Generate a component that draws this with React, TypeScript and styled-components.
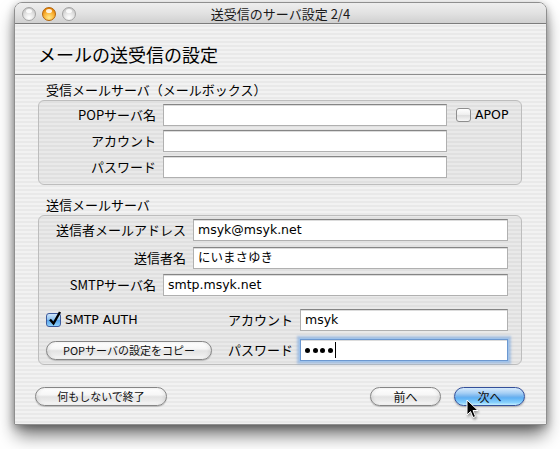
import React from "react";
import styled, { createGlobalStyle, css } from "styled-components";

const JP = `"Noto Sans CJK JP", "Noto Sans", sans-serif`;
const LATIN = `"DejaVu Sans", "Noto Sans CJK JP", sans-serif`;

const GlobalStyle = createGlobalStyle`
  html, body { margin: 0; padding: 0; background: #ffffff; }
  body { font-family: ${JP}; color: #000; }
  * { box-sizing: border-box; }
`;

const Page = styled.div`
  position: relative;
  width: 560px;
  height: 449px;
  padding: 2px 14px 0 14px;
  overflow: hidden;
`;

const Window = styled.div`
  width: 533px;
  height: 423px;
  display: flex;
  flex-direction: column;
  border: 1px solid #8f8f8f;
  border-radius: 8px 8px 0 0;
  overflow: hidden;
  box-shadow: 0 12px 18px -2px rgba(0, 0, 0, 0.55), 0 2px 8px rgba(0, 0, 0, 0.3);
  background: repeating-linear-gradient(
    to bottom,
    #f2f2f2 0px,
    #f2f2f2 2px,
    #e9e9e9 2px,
    #e9e9e9 4px
  );
`;

const TitleBar = styled.div`
  height: 21px;
  flex: none;
  display: grid;
  grid-template-columns: 70px 1fr 70px;
  align-items: center;
  background: linear-gradient(to bottom, #eeeeee 0%, #e2e2e2 50%, #d0d0d0 100%);
  border-bottom: 1px solid #7c7c7c;
  padding-top: 1px;
`;

const Lights = styled.div`
  display: flex;
  gap: 6px;
  padding-left: 7px;
`;

const Light = styled.div<{ $active?: boolean }>`
  position: relative;
  width: 14px;
  height: 14px;
  border-radius: 50%;
  ${(p) =>
    p.$active
      ? css`
          border: 1px solid #b3650a;
          background: radial-gradient(circle at 50% 80%, #ffe98c 0%, #fbb63a 45%, #e07c00 85%, #c26100 100%);
        `
      : css`
          border: 1px solid #a3a3a3;
          background: radial-gradient(circle at 50% 80%, #ffffff 0%, #e3e3e3 45%, #c6c6c6 85%, #b5b5b5 100%);
        `}
  &::after {
    content: "";
    position: absolute;
    left: 3px;
    top: 1px;
    width: 6px;
    height: 4px;
    border-radius: 50%;
    background: rgba(255, 255, 255, 0.85);
  }
`;

const Title = styled.div`
  text-align: center;
  font-family: ${JP};
  font-size: 13px;
  line-height: 16px;
  color: #1a1a1a;
`;

const Content = styled.div`
  flex: 1;
  display: flex;
  flex-direction: column;
`;

const Header = styled.div`
  padding: 19px 23px 9px;
  font-size: 18px;
  line-height: 22px;
  border-bottom: 1px solid #8d8d8d;
`;

const Body = styled.div`
  padding: 0 24px 0 23px;
  display: flex;
  flex-direction: column;
`;

const GroupLabel = styled.div<{ $top: number }>`
  margin-top: ${(p) => p.$top}px;
  height: 16px;
  line-height: 16px;
  font-size: 13px;
  padding-left: 8px;
`;

const GroupBox = styled.div<{ $pb: number }>`
  margin-top: 2px;
  border: 1px solid #bdbdbd;
  border-radius: 6px;
  background: rgba(0, 0, 0, 0.035);
  padding: 3px 12px ${(p) => p.$pb}px 0;
  display: flex;
  flex-direction: column;
`;

const Row = styled.div<{ $mt?: number }>`
  display: flex;
  align-items: center;
  height: 22px;
  margin-top: ${(p) => p.$mt ?? 0}px;
`;

const Label = styled.span<{ $w: number }>`
  width: ${(p) => p.$w}px;
  flex: none;
  text-align: right;
  font-size: 13px;
  line-height: 16px;
  margin-right: 7px;
  white-space: nowrap;
`;

const Field = styled.div<{ $w: number; $focus?: boolean }>`
  width: ${(p) => p.$w}px;
  height: 22px;
  flex: none;
  background: #ffffff;
  border: 1px solid #b0b0b0;
  border-top-color: #858585;
  box-shadow: inset 0 1px 0 #dcdcdc;
  font-family: ${LATIN};
  font-size: 12.5px;
  line-height: 20px;
  padding: 0 4px;
  display: flex;
  align-items: center;
  white-space: nowrap;
  ${(p) =>
    p.$focus &&
    css`
      border-color: #6c98d0;
      box-shadow: 0 0 0 1px #9fc2ea, 0 0 2px 3px rgba(120, 165, 222, 0.55), inset 0 1px 0 #dcdcdc;
    `}
`;

const Dot = styled.span`
  width: 5px;
  height: 5px;
  border-radius: 50%;
  background: #000;
  margin-right: 2.5px;
  flex: none;
`;

const Caret = styled.span`
  display: inline-block;
  width: 1px;
  height: 16px;
  background: #000;
  margin-left: 0px;
`;

const CheckWrap = styled.label`
  display: flex;
  align-items: center;
  gap: 4px;
  font-family: ${LATIN};
  font-size: 12.5px;
  line-height: 16px;
  white-space: nowrap;
`;

const Box = styled.span<{ $checked?: boolean }>`
  position: relative;
  width: 15px;
  height: 14px;
  flex: none;
  border-radius: 3px;
  ${(p) =>
    p.$checked
      ? css`
          border: 1px solid #3e5b9d;
          background: linear-gradient(to bottom, #cfe5fa 0%, #8fc3f0 45%, #5aa4ea 55%, #8ed2fd 100%);
        `
      : css`
          border: 1px solid #8e8e8e;
          background: linear-gradient(to bottom, #ffffff 0%, #f0f0f0 45%, #dedede 55%, #f7f7f7 100%);
        `}
  svg {
    position: absolute;
    left: 1px;
    top: -3px;
  }
`;

const LeftCell = styled.div`
  width: 181px;
  flex: none;
  padding-left: 7px;
  display: flex;
  align-items: center;
`;

const AquaButton = styled.button<{ $w: number; $default?: boolean; $size?: number }>`
  width: ${(p) => p.$w}px;
  height: 19px;
  flex: none;
  border-radius: 10px;
  font-family: ${JP};
  font-size: ${(p) => p.$size ?? 11}px;
  line-height: 17px;
  padding: 0;
  color: #111;
  cursor: default;
  ${(p) =>
    p.$default
      ? css`
          border: 1px solid #34509a;
          background: linear-gradient(
            to bottom,
            #d6eafc 0%,
            #a6cff5 30%,
            #74b4ee 50%,
            #5fb0f3 58%,
            #86d0fd 85%,
            #c5efff 100%
          );
          box-shadow: 0 1px 2px rgba(0, 0, 0, 0.3);
        `
      : css`
          border: 1px solid #858585;
          background: linear-gradient(
            to bottom,
            #ffffff 0%,
            #f6f6f6 40%,
            #e3e3e3 52%,
            #ececec 78%,
            #fbfbfb 100%
          );
          box-shadow: 0 1px 1px rgba(0, 0, 0, 0.2), inset 2px 0 3px rgba(0, 0, 0, 0.06),
            inset -2px 0 3px rgba(0, 0, 0, 0.06);
        `}
`;

const Footer = styled.div`
  margin-top: 22px;
  padding: 0 21px 0 20px;
  display: flex;
  align-items: center;
  gap: 13px;
`;

const Spacer = styled.div`
  flex: 1;
`;

const Cursor = styled.svg`
  position: absolute;
  left: 466px;
  top: 399px;
  filter: drop-shadow(1px 2px 1px rgba(0, 0, 0, 0.35));
`;

const CheckMark = () => (
  <svg width="14" height="15" viewBox="0 0 14 15">
    <path d="M2 8.5 L5.5 12.5 L12 1" fill="none" stroke="#000" strokeWidth="2.4" strokeLinejoin="miter" />
  </svg>
);

export default function App() {
  return (
    <Page>
      <GlobalStyle />
      <Window>
        <TitleBar>
          <Lights>
            <Light />
            <Light $active />
            <Light />
          </Lights>
          <Title>送受信のサーバ設定 2/4</Title>
          <div />
        </TitleBar>
        <Content>
          <Header>メールの送受信の設定</Header>
          <Body>
            <GroupLabel $top={7}>受信メールサーバ（メールボックス）</GroupLabel>
            <GroupBox $pb={6}>
              <Row>
                <Label $w={117}>POPサーバ名</Label>
                <Field $w={284} />
                <CheckWrap style={{ marginLeft: 9 }}>
                  <Box />
                  APOP
                </CheckWrap>
              </Row>
              <Row $mt={4}>
                <Label $w={117}>アカウント</Label>
                <Field $w={284} />
              </Row>
              <Row $mt={4}>
                <Label $w={117}>パスワード</Label>
                <Field $w={284} />
              </Row>
            </GroupBox>

            <GroupLabel $top={12}>送信メールサーバ</GroupLabel>
            <GroupBox $pb={3}>
              <Row>
                <Label $w={147}>送信者メールアドレス</Label>
                <Field $w={315}>msyk@msyk.net</Field>
              </Row>
              <Row $mt={6}>
                <Label $w={147}>送信者名</Label>
                <Field $w={315}>にいまさゆき</Field>
              </Row>
              <Row $mt={5}>
                <Label $w={117}>SMTPサーバ名</Label>
                <Field $w={345}>smtp.msyk.net</Field>
              </Row>
              <Row $mt={13}>
                <LeftCell>
                  <CheckWrap>
                    <Box $checked>
                      <CheckMark />
                    </Box>
                    SMTP AUTH
                  </CheckWrap>
                </LeftCell>
                <Label $w={73}>アカウント</Label>
                <Field $w={208}>msyk</Field>
              </Row>
              <Row $mt={8}>
                <LeftCell>
                  <AquaButton $w={166}>POPサーバの設定をコピー</AquaButton>
                </LeftCell>
                <Label $w={73}>パスワード</Label>
                <Field $w={208} $focus aria-label="password">
                  <Dot />
                  <Dot />
                  <Dot />
                  <Dot />
                  <Caret />
                </Field>
              </Row>
            </GroupBox>
          </Body>
          <Footer>
            <AquaButton $w={132}>何もしないで終了</AquaButton>
            <Spacer />
            <AquaButton $w={71} $size={12}>
              前へ
            </AquaButton>
            <AquaButton $w={71} $size={12} $default>
              次へ
            </AquaButton>
          </Footer>
        </Content>
      </Window>
      <Cursor width="13" height="20" viewBox="0 0 13 20">
        <path
          d="M1 1 L1 16 L4.5 12.5 L7 18.5 L9.5 17.5 L7 11.5 L12 11.5 Z"
          fill="#000"
          stroke="#fff"
          strokeWidth="1"
          strokeLinejoin="round"
        />
      </Cursor>
    </Page>
  );
}
